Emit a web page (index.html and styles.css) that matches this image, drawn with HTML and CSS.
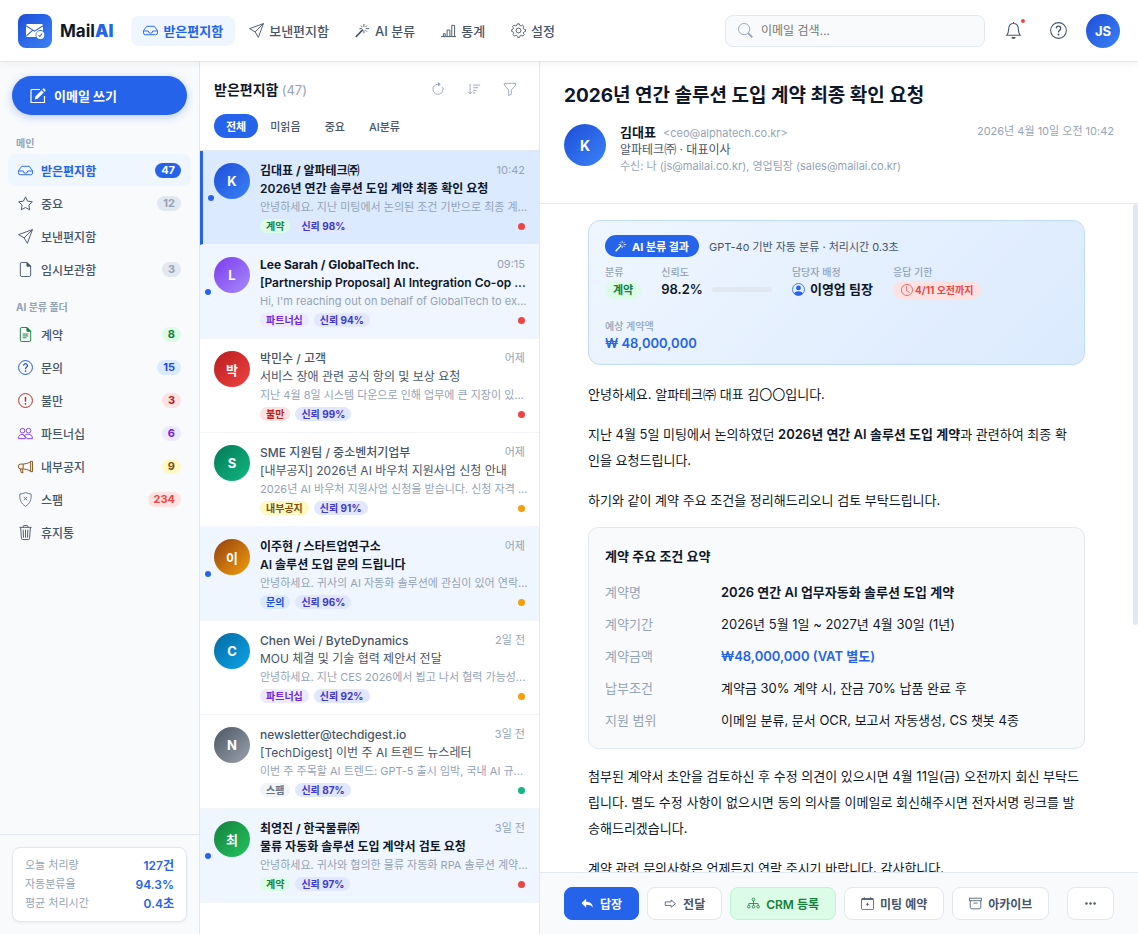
FILE: index.html
```
<!DOCTYPE html>
<html lang="ko">
<head>
<meta charset="UTF-8">
<meta name="viewport" content="width=device-width, initial-scale=1.0">
<title>MailAI - 받은편지함</title>
<link rel="stylesheet" href="styles.css">
</head>
<body>
<!-- icon set -->
<svg class="sprite" aria-hidden="true">
<symbol id="i-inbox" viewBox="0 0 16 16"><path d="M4 3.5h8l3.5 4.7v2.3a2 2 0 0 1-2 2h-11a2 2 0 0 1-2-2V8.2zM.6 8.5h5a2.4 2.4 0 0 0 4.8 0h5"/></symbol>
<symbol id="i-send" viewBox="0 0 16 16"><path d="M15.4.6 10 15.3 6.5 9.5.6 6zM15.4.6 6.5 9.5"/></symbol>
<symbol id="i-magic" viewBox="0 0 16 16"><path d="M9.5 1v3M9.5 8v3M4.7 6h2.8M11.5 6h3.5M6.3 2.8l1.6 1.6M12.7 2.8l-1.6 1.6M11.1 7.6l1.6 1.6"/><path stroke-width="1.8" d="m8.4 7.1-7.6 7.8"/></symbol>
<symbol id="i-chart" viewBox="0 0 16 16"><path d="M0 14.5h16M2.5 14.5v-3h2v3M6.5 14.5v-7h3v7M11.5 14.5v-12h3v12"/></symbol>
<symbol id="i-gear" viewBox="0 0 16 16"><circle cx="8" cy="8" r="2.6"/><path d="m6.7.9-.4 1.2a1.3 1.3 0 0 1-1.8.8l-1.2-.6-1.6 1.6.7 1.1a1.3 1.3 0 0 1-.8 1.8L.8 7v2l1.2.4a1.3 1.3 0 0 1 .8 1.8l-.7 1.1 1.6 1.6 1.2-.6a1.3 1.3 0 0 1 1.8.8l.4 1.2h2l.4-1.2a1.3 1.3 0 0 1 1.8-.8l1.2.6 1.6-1.6-.7-1.1a1.3 1.3 0 0 1 .8-1.8l1.2-.4V7L14 6.7a1.3 1.3 0 0 1-.8-1.8l.7-1.1-1.6-1.6-1.2.7a1.3 1.3 0 0 1-1.8-.8L8.8.9z"/></symbol>
<symbol id="i-search" viewBox="0 0 16 16"><circle cx="6.5" cy="6.5" r="6"/><path stroke-width="1.8" d="m11 11 4.3 4.3"/></symbol>
<symbol id="i-bell" viewBox="0 0 16 16"><path d="M8 1.4c-2.7 0-4.3 2-4.5 4.6-.2 3-.7 5.3-1.9 6.5h12.8c-1.200-1.200-1.700-3.500-1.900-6.500C12.300 3.400 10.700 1.400 8 1.400zM8 .1v1.300"/><path fill="currentColor" stroke="none" d="M6 14h4a2 2 0 0 1-4 0z"/></symbol>
<symbol id="i-help" viewBox="0 0 16 16"><circle cx="8" cy="8" r="7.4"/><path stroke-width="1.3" d="M5.900 6a2.100 2.100 0 1 1 3.200 1.800c-.7.5-1.100.9-1.100 2"/><circle cx="8" cy="11.700" r=".9" fill="currentColor" stroke="none"/></symbol>
<symbol id="i-edit" viewBox="0 0 16 16"><path stroke-width="1.200" d="M10 1.500H2a1 1 0 0 0-1 1v12h13.500V8"/><path fill="currentColor" stroke="none" d="M13.300.6a.6.6 0 0 1 .9 0l1.300 1.300a.6.6 0 0 1 0 .9l-1 1-2.200-2.200zM11.600 2.300l2.200 2.200-6.300 6.200-2.800.8.7-2.900z"/></symbol>
<symbol id="i-star" viewBox="0 0 16 16"><path d="m8 .9 2.200 4.600 5.100.7-3.700 3.500.9 5L8 12.300l-4.500 2.400.9-5L.7 6.200l5.100-.7z"/></symbol>
<symbol id="i-file" viewBox="0 0 16 16"><path d="M9.500.5H4a1.500 1.500 0 0 0-1.500 1.500v12A1.500 1.500 0 0 0 4 15.500h8a1.500 1.500 0 0 0 1.500-1.500V4.500z"/><path fill="currentColor" d="M9.500.5v4h4z"/></symbol>
<symbol id="i-doc" viewBox="0 0 16 16"><path d="M9.500.5H4a1.500 1.500 0 0 0-1.500 1.500v12A1.500 1.500 0 0 0 4 15.500h8a1.500 1.500 0 0 0 1.500-1.500V4.500zM5 7.500h6M5 9.500h6M5 11.500h4"/><path fill="currentColor" d="M9.500.5v4h4z"/></symbol>
<symbol id="i-alert" viewBox="0 0 16 16"><circle cx="8" cy="8" r="7.400"/><path stroke-width="1.500" d="M8 4.200v5"/><circle cx="8" cy="11.500" r=".9" fill="currentColor" stroke="none"/></symbol>
<symbol id="i-people" viewBox="0 0 16 16"><circle cx="4.800" cy="5" r="2.500"/><circle cx="11.200" cy="5" r="2.500"/><path d="M.6 13.500v-1c0-1.900 1.600-3.500 3.600-3.500 1.800 0 3.300 1.200 3.500 3v1.500zM7.500 9.800c.7-.6 1.900-.9 3.700-.9 2.600 0 4.200 1.700 4.200 4.600H9.500L6 9.700"/></symbol>
<symbol id="i-mega" viewBox="0 0 16 16"><path d="M13.500 2.500v11h2v-11zM13.500 2.900C11 4.700 7.500 5.500 2.500 5.500a2 2 0 0 0-2 2v1a2 2 0 0 0 2 2c5 0 8.500.8 11 2.600M5.500 5.500v5M2.500 10.600l.9 3.900h2l-.9-3.900"/></symbol>
<symbol id="i-shield" viewBox="0 0 16 16"><path d="M8 .6C6 1.400 4 2 2 2.300c-.6 5.700 1.200 9.900 6 13.100 4.800-3.200 6.600-7.400 6-13.100C12 2 10 1.400 8 .6zM6.300 5.400l3.400 3.400M9.700 5.400 6.300 8.800"/></symbol>
<symbol id="i-trash" viewBox="0 0 16 16"><path d="M1.500 2.500h13M5.500 2.500v-1a1 1 0 0 1 1-1h3a1 1 0 0 1 1 1v1M2.800 2.500l.9 12a1 1 0 0 0 1 1h6.600a1 1 0 0 0 1-1l.9-12M5.500 5l.4 8.500M8 5v8.500M10.500 5l-.4 8.500"/></symbol>
<symbol id="i-reload" viewBox="0 0 16 16"><path d="M8 2.500a5.800 5.800 0 1 0 5.200 3.200"/><path fill="currentColor" stroke="none" d="M8 0v5l3-2.500z"/></symbol>
<symbol id="i-sort" viewBox="0 0 16 16"><path d="M3.500 2v11.500M1 11l2.500 2.500L6 11M7 3.500h8M7 6.500h6M7 9.500h4M7 12.500h2"/></symbol>
<symbol id="i-funnel" viewBox="0 0 16 16"><path d="M1.500 1.500h13v2L9.500 9v5l-3 1.500V9l-5-5.500z"/></symbol>
<symbol id="i-person" viewBox="0 0 16 16"><circle cx="8" cy="8" r="7.400"/><path fill="currentColor" stroke="none" d="M11 6a3 3 0 1 1-6 0 3 3 0 0 1 6 0zM2.500 13c1-2 3-3 5.500-3s4.500 1 5.500 3A7.500 7.500 0 0 1 8 15.500 7.500 7.500 0 0 1 2.500 13z"/></symbol>
<symbol id="i-clock" viewBox="0 0 16 16"><circle cx="8" cy="8" r="7.400"/><path d="M7.500 3v6l4 2.300"/></symbol>
<symbol id="i-reply" viewBox="0 0 16 16"><path fill="currentColor" stroke="none" d="M6.400 3v2.700c4.800.1 7.800 2.200 8.300 7.300-2-2.500-4.300-3.400-8.300-3.400v2.700a.4.4 0 0 1-.7.3L1 8.100a.6.6 0 0 1 0-.9l4.700-4.500a.4.4 0 0 1 .7.3z"/></symbol>
<symbol id="i-forward" viewBox="0 0 16 16"><path d="M1.500 6h7.200V3.700l5.500 4.500-5.500 4.500v-2.300H1.500z"/></symbol>
<symbol id="i-tree" viewBox="0 0 16 16"><circle cx="8" cy="3" r="1.700"/><path d="M8 4.700V8M2.300 10V8h11.400v2M8 8v2"/><circle cx="2.300" cy="12" r="1.600"/><circle cx="8" cy="12" r="1.600"/><circle cx="13.700" cy="12" r="1.600"/></symbol>
<symbol id="i-cal" viewBox="0 0 16 16"><path d="M4 0v2M12 0v2M8 7v4M6 9h4M.6 3v11a1.500 1.500 0 0 0 1.500 1.500h11.800a1.500 1.500 0 0 0 1.500-1.500V3"/><path stroke-width="2.200" d="M.6 2.500h14.800"/></symbol>
<symbol id="i-archive" viewBox="0 0 16 16"><path d="M.5 1.500h15v3H.5zM1.500 4.500v8a2 2 0 0 0 2 2h9a2 2 0 0 0 2-2v-8M5.500 7.500h5"/></symbol>
<symbol id="i-dots" viewBox="0 0 16 16"><g fill="currentColor" stroke="none"><circle cx="3" cy="8" r="1.500"/><circle cx="8" cy="8" r="1.500"/><circle cx="13" cy="8" r="1.500"/></g></symbol>
</svg>

<header class="topbar">
<div class="logo">
<span class="logo-icon">
<svg viewBox="0 0 20 20"><path fill="#fff" d="M1 4.500C1 3.700 1.700 3 2.500 3h14c.8 0 1.500.7 1.500 1.500v5.200a5 5 0 0 0-7 6.300H2.500C1.700 16 1 15.300 1 14.500z"/><path fill="none" stroke="#2b62e6" stroke-width="1.100" d="m1 4.800 8.500 5.300L18 4.800M1.500 14.800l6-5.500"/><circle cx="15.300" cy="14" r="4" fill="#fff"/><path fill="none" stroke="#2b62e6" stroke-width="1.100" d="m13.600 14.200 1.300 1.300 2.300-3"/></svg>
</span>
<span class="logo-text">Mail<b>AI</b></span>
</div>
<nav class="topnav">
<a href="#" class="active"><svg class="icon"><use href="#i-inbox"/></svg>받은편지함</a>
<a href="#"><svg class="icon"><use href="#i-send"/></svg>보낸편지함</a>
<a href="#"><svg class="icon"><use href="#i-magic"/></svg>AI 분류</a>
<a href="#"><svg class="icon"><use href="#i-chart"/></svg>통계</a>
<a href="#"><svg class="icon"><use href="#i-gear"/></svg>설정</a>
</nav>
<div class="top-right">
<label class="search"><svg class="icon"><use href="#i-search"/></svg><input type="text" placeholder="이메일 검색..." aria-label="이메일 검색"></label>
<button class="icon-btn" aria-label="알림"><svg class="icon"><use href="#i-bell"/></svg><span class="notif"></span></button>
<button class="icon-btn" aria-label="도움말"><svg class="icon"><use href="#i-help"/></svg></button>
<button class="me">JS</button>
</div>
</header>

<div class="layout">
<aside class="sidebar">
<div class="side-scroll">
<button class="compose"><svg class="icon"><use href="#i-edit"/></svg>이메일 쓰기</button>
<h2 class="side-label">메인</h2>
<nav class="side-nav">
<a href="#" class="active"><svg class="icon"><use href="#i-inbox"/></svg>받은편지함<span class="count blue-solid">47</span></a>
<a href="#"><svg class="icon"><use href="#i-star"/></svg>중요<span class="count">12</span></a>
<a href="#"><svg class="icon"><use href="#i-send"/></svg>보낸편지함</a>
<a href="#"><svg class="icon"><use href="#i-file"/></svg>임시보관함<span class="count">3</span></a>
</nav>
<h2 class="side-label">AI 분류 폴더</h2>
<nav class="side-nav">
<a href="#"><svg class="icon c-green"><use href="#i-doc"/></svg>계약<span class="count green">8</span></a>
<a href="#"><svg class="icon c-blue"><use href="#i-help"/></svg>문의<span class="count blue">15</span></a>
<a href="#"><svg class="icon c-red"><use href="#i-alert"/></svg>불만<span class="count red">3</span></a>
<a href="#"><svg class="icon c-purple"><use href="#i-people"/></svg>파트너십<span class="count purple">6</span></a>
<a href="#"><svg class="icon c-brown"><use href="#i-mega"/></svg>내부공지<span class="count yellow">9</span></a>
<a href="#"><svg class="icon c-slate"><use href="#i-shield"/></svg>스팸<span class="count danger">234</span></a>
<a href="#"><svg class="icon"><use href="#i-trash"/></svg>휴지통</a>
</nav>
</div>
<div class="side-foot">
<dl class="stats">
<div><dt>오늘 처리량</dt><dd>127건</dd></div>
<div><dt>자동분류율</dt><dd>94.3%</dd></div>
<div><dt>평균 처리시간</dt><dd>0.4초</dd></div>
</dl>
</div>
</aside>

<section class="list">
<div class="list-head">
<div class="list-title">
<h1>받은편지함 <span>(47)</span></h1>
<div class="list-tools">
<button aria-label="새로고침"><svg class="icon"><use href="#i-reload"/></svg></button>
<button aria-label="정렬"><svg class="icon"><use href="#i-sort"/></svg></button>
<button aria-label="필터"><svg class="icon"><use href="#i-funnel"/></svg></button>
</div>
</div>
<div class="tabs">
<button class="active">전체</button>
<button>미읽음</button>
<button>중요</button>
<button>AI분류</button>
</div>
</div>

<article class="mail unread selected">
<div class="avatar av-blue">K</div>
<div class="mail-body">
<div class="mail-top"><span class="from">김대표 / 알파테크㈜</span><time>10:42</time></div>
<div class="subject">2026년 연간 솔루션 도입 계약 최종 확인 요청</div>
<div class="preview">안녕하세요. 지난 미팅에서 논의된 조건 기반으로 최종 계...</div>
<div class="tags"><span class="tag green">계약</span><span class="tag indigo">신뢰 98%</span><i class="prio high"></i></div>
</div>
</article>
<article class="mail unread">
<div class="avatar av-purple">L</div>
<div class="mail-body">
<div class="mail-top"><span class="from">Lee Sarah / GlobalTech Inc.</span><time>09:15</time></div>
<div class="subject">[Partnership Proposal] AI Integration Co-op ...</div>
<div class="preview">Hi, I'm reaching out on behalf of GlobalTech to ex...</div>
<div class="tags"><span class="tag purple">파트너십</span><span class="tag indigo">신뢰 94%</span><i class="prio high"></i></div>
</div>
</article>
<article class="mail">
<div class="avatar av-red">박</div>
<div class="mail-body">
<div class="mail-top"><span class="from">박민수 / 고객</span><time>어제</time></div>
<div class="subject">서비스 장애 관련 공식 항의 및 보상 요청</div>
<div class="preview">지난 4월 8일 시스템 다운으로 인해 업무에 큰 지장이 있...</div>
<div class="tags"><span class="tag red">불만</span><span class="tag indigo">신뢰 99%</span><i class="prio high"></i></div>
</div>
</article>
<article class="mail">
<div class="avatar av-teal">S</div>
<div class="mail-body">
<div class="mail-top"><span class="from">SME 지원팀 / 중소벤처기업부</span><time>어제</time></div>
<div class="subject">[내부공지] 2026년 AI 바우처 지원사업 신청 안내</div>
<div class="preview">2026년 AI 바우처 지원사업 신청을 받습니다. 신청 자격 ...</div>
<div class="tags"><span class="tag yellow">내부공지</span><span class="tag indigo">신뢰 91%</span><i class="prio mid"></i></div>
</div>
</article>
<article class="mail unread">
<div class="avatar av-amber">이</div>
<div class="mail-body">
<div class="mail-top"><span class="from">이주현 / 스타트업연구소</span><time>어제</time></div>
<div class="subject">AI 솔루션 도입 문의 드립니다</div>
<div class="preview">안녕하세요. 귀사의 AI 자동화 솔루션에 관심이 있어 연락...</div>
<div class="tags"><span class="tag blue">문의</span><span class="tag indigo">신뢰 96%</span><i class="prio mid"></i></div>
</div>
</article>
<article class="mail">
<div class="avatar av-sky">C</div>
<div class="mail-body">
<div class="mail-top"><span class="from">Chen Wei / ByteDynamics</span><time>2일 전</time></div>
<div class="subject">MOU 체결 및 기술 협력 제안서 전달</div>
<div class="preview">안녕하세요. 지난 CES 2026에서 뵙고 나서 협력 가능성...</div>
<div class="tags"><span class="tag purple">파트너십</span><span class="tag indigo">신뢰 92%</span><i class="prio mid"></i></div>
</div>
</article>
<article class="mail">
<div class="avatar av-gray">N</div>
<div class="mail-body">
<div class="mail-top"><span class="from">newsletter@techdigest.io</span><time>3일 전</time></div>
<div class="subject">[TechDigest] 이번 주 AI 트렌드 뉴스레터</div>
<div class="preview">이번 주 주목할 AI 트렌드: GPT-5 출시 임박, 국내 AI 규...</div>
<div class="tags"><span class="tag gray">스팸</span><span class="tag indigo">신뢰 87%</span><i class="prio low"></i></div>
</div>
</article>
<article class="mail unread">
<div class="avatar av-green">최</div>
<div class="mail-body">
<div class="mail-top"><span class="from">최영진 / 한국물류㈜</span><time>3일 전</time></div>
<div class="subject">물류 자동화 솔루션 도입 계약서 검토 요청</div>
<div class="preview">안녕하세요. 귀사와 협의한 물류 자동화 RPA 솔루션 계약...</div>
<div class="tags"><span class="tag green">계약</span><span class="tag indigo">신뢰 97%</span><i class="prio high"></i></div>
</div>
</article>
</section>

<main class="detail">
<div class="detail-head">
<h2>2026년 연간 솔루션 도입 계약 최종 확인 요청</h2>
<div class="sender">
<div class="avatar av-blue">K</div>
<div class="sender-info">
<div class="sender-name">김대표 <span>&lt;ceo@alphatech.co.kr&gt;</span></div>
<div class="sender-role">알파테크㈜ · 대표이사</div>
<div class="sender-to">수신: 나 (js@mailai.co.kr), 영업팀장 (sales@mailai.co.kr)</div>
</div>
<time>2026년 4월 10일 오전 10:42</time>
</div>
</div>

<div class="detail-wrap">
<div class="detail-body">
<div class="ai-card">
<div class="ai-top">
<span class="ai-badge"><svg class="icon"><use href="#i-magic"/></svg>AI 분류 결과</span>
<span class="ai-note">GPT-4o 기반 자동 분류 · 처리시간 0.3초</span>
</div>
<div class="ai-fields">
<div class="field"><span class="field-label">분류</span><span class="pill green">계약</span></div>
<div class="field"><span class="field-label">신뢰도</span><span class="field-value">98.2% <span class="bar"></span></span></div>
<div class="field"><span class="field-label">담당자 배정</span><span class="field-value"><svg class="icon c-accent"><use href="#i-person"/></svg>이영업 팀장</span></div>
<div class="field"><span class="field-label">응답 기한</span><span class="pill due"><svg class="icon"><use href="#i-clock"/></svg>4/11 오전까지</span></div>
<div class="field"><span class="field-label">예상 계약액</span><span class="field-value accent">₩ 48,000,000</span></div>
</div>
</div>

<div class="content">
<p>안녕하세요. 알파테크㈜ 대표 김〇〇입니다.</p>
<p>지난 4월 5일 미팅에서 논의하였던 <strong>2026년 연간 AI 솔루션 도입 계약</strong>과 관련하여 최종 확<br>인을 요청드립니다.</p>
<p>하기와 같이 계약 주요 조건을 정리해드리오니 검토 부탁드립니다.</p>
<div class="terms">
<h3>계약 주요 조건 요약</h3>
<table>
<tr><th>계약명</th><td><strong>2026 연간 AI 업무자동화 솔루션 도입 계약</strong></td></tr>
<tr><th>계약기간</th><td>2026년 5월 1일 ~ 2027년 4월 30일 (1년)</td></tr>
<tr><th>계약금액</th><td class="accent">₩48,000,000 (VAT 별도)</td></tr>
<tr><th>납부조건</th><td>계약금 30% 계약 시, 잔금 70% 납품 완료 후</td></tr>
<tr><th>지원 범위</th><td>이메일 분류, 문서 OCR, 보고서 자동생성, CS 챗봇 4종</td></tr>
</table>
</div>
<p>첨부된 계약서 초안을 검토하신 후 수정 의견이 있으시면 4월 11일(금) 오전까지 회신 부탁드립니다. 별도 수정 사항이 없으시면 동의 의사를 이메일로 회신해주시면 전자서명 링크를 발송해드리겠습니다.</p>
<p>계약 관련 문의사항은 언제든지 연락 주시기 바랍니다. 감사합니다.</p>
</div>
</div>
<div class="scroll-track"><div class="scroll-thumb"></div></div>
</div>

<div class="actions">
<button class="primary"><svg class="icon"><use href="#i-reply"/></svg>답장</button>
<button><svg class="icon"><use href="#i-forward"/></svg>전달</button>
<button class="crm"><svg class="icon"><use href="#i-tree"/></svg>CRM 등록</button>
<button><svg class="icon"><use href="#i-cal"/></svg>미팅 예약</button>
<button><svg class="icon"><use href="#i-archive"/></svg>아카이브</button>
<button class="more" aria-label="더보기"><svg class="icon"><use href="#i-dots"/></svg></button>
</div>
</main>
</div>
</body>
</html>
```
FILE: styles.css
```
* {
box-sizing: border-box;
margin: 0;
padding: 0;
}
body {
font-family: Inter, "Noto Sans CJK KR", sans-serif;
font-size: 13px;
color: #0f172a;
background: #fff;
height: 100vh;
display: flex;
flex-direction: column;
overflow: hidden;
}
button, input {
font: inherit;
color: inherit;
border: none;
background: none;
}
button { cursor: pointer; }
a { color: inherit; text-decoration: none; }
.sprite { display: none; }
.icon {
width: 15px;
height: 15px;
flex-shrink: 0;
fill: none;
stroke: currentColor;
stroke-width: 1;
}

/* top bar */
.topbar {
display: flex;
align-items: center;
height: 62px;
flex-shrink: 0;
padding: 0 18px;
border-bottom: 1px solid #e2e8f0;
box-shadow: 0 1px 8px rgba(0,0,0,0.06);
position: relative;
z-index: 2;
background: #fff;
}
.logo {
display: flex;
align-items: center;
gap: 8px;
margin-right: 18px;
}
.logo-icon {
width: 34px;
height: 34px;
border-radius: 8px;
background: linear-gradient(135deg, #1d4ed8, #3b82f6);
display: flex;
align-items: center;
justify-content: center;
}
.logo-icon svg { width: 20px; height: 20px; }
.logo-text { font-size: 17px; font-weight: 700; }
.logo-text b { color: #2563eb; }
.topnav { display: flex; gap: 2px; }
.topnav a {
display: flex;
align-items: center;
gap: 5px;
height: 30px;
padding: 0 12px;
border-radius: 8px;
font-weight: 500;
color: #475569;
white-space: nowrap;
}
.topnav a.active { background: #eff6ff; color: #2563eb; font-weight: 600; }
.top-right {
display: flex;
align-items: center;
gap: 11px;
margin-left: auto;
}
.search {
display: flex;
align-items: center;
gap: 8px;
width: 260px;
height: 32px;
padding: 0 12px;
border: 1px solid #e2e8f0;
border-radius: 8px;
background: #f8fafc;
color: #94a3b8;
}
.search input { flex: 1; min-width: 0; outline: none; font-size: 12px; }
.search input::placeholder { color: #757575; }
.icon-btn {
position: relative;
width: 34px;
height: 34px;
display: flex;
align-items: center;
justify-content: center;
color: #475569;
}
.icon-btn .icon { width: 17px; height: 17px; }
.notif {
position: absolute;
top: 5px;
right: 5px;
width: 4px;
height: 4px;
border-radius: 50%;
background: #ef4444;
}
.me {
width: 34px;
height: 34px;
border-radius: 50%;
background: linear-gradient(135deg, #1d4ed8, #3b82f6);
color: #fff;
font-weight: 700;
}

.layout { flex: 1; display: flex; min-height: 0; }

/* sidebar */
.sidebar {
width: 200px;
flex-shrink: 0;
display: flex;
flex-direction: column;
background: #f8fafc;
border-right: 1px solid #e2e8f0;
}
.side-scroll { flex: 1; padding: 14px 8px 0; }
.compose {
display: flex;
align-items: center;
gap: 8px;
width: calc(100% - 8px);
height: 39px;
margin: 0 4px 20px;
padding: 0 18px;
border-radius: 20px;
background: #2563eb;
color: #fff;
font-weight: 700;
box-shadow: 0 2px 8px rgba(37,99,235,0.3);
}
.compose .icon { width: 16px; height: 16px; }
.side-label {
padding: 0 8px;
font-size: 10px;
line-height: 16px;
font-weight: 700;
color: #94a3b8;
margin-bottom: 3px;
}
.side-nav {
display: flex;
flex-direction: column;
gap: 1px;
margin-bottom: 14px;
}
.side-nav a {
display: flex;
align-items: center;
gap: 8px;
height: 32px;
padding: 0 10px;
border-radius: 8px;
font-size: 12px;
font-weight: 500;
color: #475569;
}
.side-nav a.active { background: #eff6ff; color: #2563eb; font-weight: 600; }
.count {
margin-left: auto;
padding: 0 6px;
border-radius: 10px;
font-size: 11px;
line-height: 15px;
font-weight: 700;
background: #e2e8f0;
color: #94a3b8;
}
.blue-solid { background: #2563eb; color: #fff; }
.green { background: #dcfce7; color: #15803d; }
.blue { background: #dbeafe; color: #1d4ed8; }
.red { background: #fee2e2; color: #b91c1c; }
.purple { background: #ede9fe; color: #6d28d9; }
.yellow { background: #fef9c3; color: #854d0e; }
.danger { background: #fee2e2; color: #ef4444; }
.indigo { background: #e0e7ff; color: #4338ca; }
.gray { background: #f1f5f9; color: #64748b; }
.c-green { color: #15803d; }
.c-blue { color: #1d4ed8; }
.c-red { color: #b91c1c; }
.c-purple { color: #7c3aed; }
.c-brown { color: #854d0e; }
.c-slate { color: #64748b; }
.c-accent, .accent { color: #2563eb; }
.side-foot { padding: 12px; border-top: 1px solid #e2e8f0; }
.stats {
padding: 8px 12px;
background: #fff;
border: 1px solid #e2e8f0;
border-radius: 8px;
box-shadow: 0 1px 3px rgba(0,0,0,0.06);
}
.stats div {
display: flex;
justify-content: space-between;
height: 19px;
line-height: 19px;
font-size: 11px;
}
.stats dt { color: #94a3b8; }
.stats dd { color: #2563eb; font-size: 12px; font-weight: 600; }

/* mail list */
.list {
width: 340px;
flex-shrink: 0;
border-right: 1px solid #e2e8f0;
overflow: hidden;
}
.list-head { padding: 14px 14px 12px; border-bottom: 1px solid #e2e8f0; }
.list-title {
display: flex;
align-items: center;
justify-content: space-between;
height: 26px;
margin-bottom: 12px;
}
.list-title h1 { font-size: 14px; font-weight: 700; }
.list-title h1 span { font-size: 13px; font-weight: 400; color: #94a3b8; }
.list-tools { display: flex; gap: 6px; }
.list-tools button {
width: 30px;
height: 26px;
display: flex;
align-items: center;
justify-content: center;
color: #94a3b8;
}
.list-tools .icon { width: 14px; height: 14px; }
.tabs { display: flex; }
.tabs button {
height: 24px;
padding: 0 12px;
border-radius: 12px;
font-size: 11px;
font-weight: 500;
color: #475569;
}
.tabs button.active { background: #2563eb; color: #fff; font-weight: 700; }
.mail {
position: relative;
display: flex;
gap: 10px;
padding: 10px 14px 11px;
border-bottom: 1px solid #f1f5f9;
}
.mail.unread { background: #eff6ff; }
.mail.selected {
background: #dbeafe;
border-left: 3px solid #2563eb;
padding-left: 11px;
}
.mail.unread::before {
content: "";
position: absolute;
left: 5px;
top: 44px;
width: 6px;
height: 6px;
border-radius: 50%;
background: #2563eb;
}
.avatar {
width: 36px;
height: 36px;
margin-top: 2px;
flex-shrink: 0;
border-radius: 50%;
display: flex;
align-items: center;
justify-content: center;
color: #fff;
font-size: 13px;
font-weight: 700;
}
.av-blue { background: linear-gradient(135deg, #1d4ed8, #3b82f6); }
.av-purple { background: linear-gradient(135deg, #7c3aed, #a78bfa); }
.av-red { background: linear-gradient(135deg, #b91c1c, #ef4444); }
.av-teal { background: linear-gradient(135deg, #047857, #10b981); }
.av-amber { background: linear-gradient(135deg, #92400e, #f59e0b); }
.av-sky { background: linear-gradient(135deg, #0369a1, #0ea5e9); }
.av-gray { background: linear-gradient(135deg, #4b5563, #9ca3af); }
.av-green { background: linear-gradient(135deg, #15803d, #22c55e); }
.mail-body { flex: 1; min-width: 0; }
.mail-top {
display: flex;
justify-content: space-between;
height: 19px;
line-height: 19px;
}
.from { font-size: 12px; font-weight: 500; color: #475569; }
.mail time { font-size: 11px; color: #94a3b8; }
.subject, .preview { white-space: nowrap; }
.subject { font-size: 12px; line-height: 18px; color: #475569; }
.preview { font-size: 11px; line-height: 18px; color: #94a3b8; }
.unread .from { font-weight: 700; color: #0f172a; }
.unread .subject { font-weight: 600; color: #0f172a; }
.tags {
display: flex;
align-items: center;
gap: 5px;
margin-top: 3px;
}
.tag {
padding: 0 6px;
border-radius: 8px;
font-size: 10px;
line-height: 14px;
font-weight: 700;
}
.prio {
width: 7px;
height: 7px;
border-radius: 50%;
margin-left: auto;
}
.high { background: #ef4444; }
.mid { background: #f59e0b; }
.low { background: #10b981; }

/* mail detail */
.detail { flex: 1; min-width: 0; display: flex; flex-direction: column; }
.detail-head { padding: 20px 24px 28px; border-bottom: 1px solid #e2e8f0; }
.detail-head h2 {
font-size: 19px;
line-height: 28px;
font-weight: 700;
margin-bottom: 14px;
}
.sender { display: flex; gap: 14px; }
.sender .avatar { width: 42px; height: 42px; margin-top: 0; font-size: 14px; }
.sender-info { flex: 1; }
.sender-info div { height: 17px; line-height: 17px; }
.sender-name { font-weight: 700; }
.sender-name span { font-size: 11px; font-weight: 400; color: #94a3b8; margin-left: 4px; }
.sender-role { font-size: 12px; color: #475569; }
.sender-to { font-size: 11px; color: #94a3b8; }
.sender time { font-size: 11px; line-height: 15px; color: #94a3b8; }
.detail-wrap {
flex: 1;
min-height: 0;
display: flex;
overflow: hidden;
}
.detail-body {
flex: 1;
min-width: 0;
padding: 16px 48px 0;
}
.scroll-track { width: 5px; }
.scroll-thumb { height: 63%; background: #e2e8f0; border-radius: 3px; }
.ai-card {
padding: 14px 16px 12px;
border: 1px solid #bfdbfe;
border-radius: 12px;
background: linear-gradient(135deg, #eff6ff, #dbeafe);
margin-bottom: 16px;
}
.ai-top {
display: flex;
align-items: center;
gap: 10px;
margin-bottom: 8px;
}
.ai-badge {
display: flex;
align-items: center;
gap: 5px;
height: 22px;
padding: 0 10px;
border-radius: 11px;
background: #2563eb;
color: #fff;
font-size: 11px;
font-weight: 700;
}
.ai-badge .icon { width: 12px; height: 12px; }
.ai-note { font-size: 11px; color: #475569; }
.ai-fields { display: flex; flex-wrap: wrap; gap: 20px; }
.field {
display: flex;
flex-direction: column;
align-items: flex-start;
}
.field-label {
font-size: 10px;
line-height: 14px;
font-weight: 500;
color: #94a3b8;
margin-bottom: 1px;
}
.field-value {
display: flex;
align-items: center;
gap: 5px;
line-height: 18px;
font-weight: 600;
}
.field-value .icon { width: 13px; height: 13px; }
.bar {
width: 60px;
height: 5px;
margin-left: 4px;
border-radius: 3px;
background: #e2e8f0;
}
.pill {
display: flex;
align-items: center;
gap: 2px;
padding: 0 8px;
margin-top: 1px;
border-radius: 9px;
font-size: 11px;
line-height: 18px;
font-weight: 700;
}
.due { background: #fee2e2; color: #ef4444; font-size: 10px; }
.due .icon { width: 12px; height: 12px; }
.content { line-height: 26px; }
.content p { margin-bottom: 14px; word-break: break-all; }
.terms {
padding: 16px 16px 12px;
margin-bottom: 14px;
border: 1px solid #e2e8f0;
border-radius: 10px;
background: #f8fafc;
}
.terms h3 { font-size: 13px; line-height: 24px; font-weight: 600; margin-bottom: 8px; }
.terms table { border-collapse: collapse; width: 100%; font-size: 13px; }
.terms th {
width: 116px;
text-align: left;
font-weight: 400;
color: #94a3b8;
}
.terms td, .terms th { padding: 4px 0; line-height: 24px; }
.terms td.accent { font-weight: 600; }
.content strong { font-weight: 600; }
.actions {
display: flex;
gap: 8px;
padding: 14px 24px;
border-top: 1px solid #e2e8f0;
background: #f8fafc;
position: relative;
}
.actions button {
display: flex;
align-items: center;
gap: 6px;
height: 33px;
padding: 0 16px;
border: 1px solid #e2e8f0;
border-radius: 8px;
background: #fff;
color: #475569;
font-size: 12px;
font-weight: 600;
white-space: nowrap;
}
.actions .icon { width: 13px; height: 13px; }
.actions .primary { background: #2563eb; border-color: #2563eb; color: #fff; }
.actions .crm { background: #dcfce7; border-color: #bbf7d0; color: #15803d; }
.actions .more { margin-left: auto; }
```
